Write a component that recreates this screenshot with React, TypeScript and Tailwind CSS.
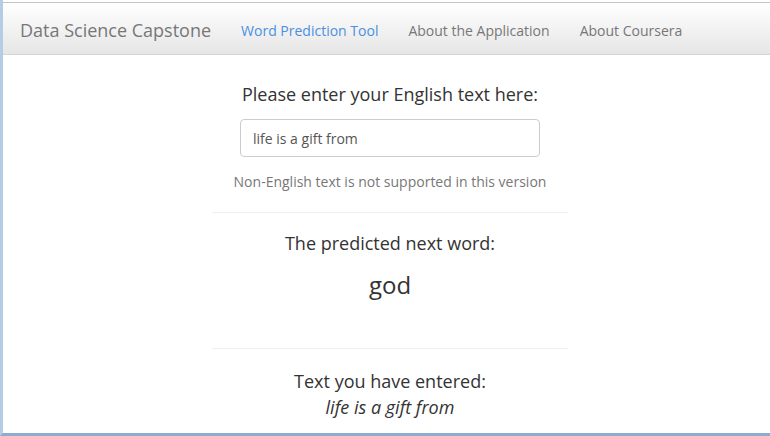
export default function App() {
  return (
    <div className="w-[770px] h-[436px] bg-white overflow-hidden font-['Open_Sans',sans-serif] text-[#333]">
      <div className="h-full flex flex-col border-l-[3px] border-l-[#b4cce6] border-b-[3px] border-b-[#8fabd0] pt-[2px]">
        {/* Navbar */}
        <nav className="h-[53px] flex items-center pt-[4px] border-t border-t-[#c4c4c4] border-b border-b-[#d4d4d4] bg-gradient-to-b from-white to-[#e6e6e6]">
          <span className="ml-[17px] text-[18px] text-[#777]">Data Science Capstone</span>
          <ul className="flex ml-[15px] text-[14px]">
            <li className="px-[15px] text-[#4a90e2]">Word Prediction Tool</li>
            <li className="px-[15px] text-[#777]">About the Application</li>
            <li className="px-[15px] text-[#777]">About Coursera</li>
          </ul>
        </nav>

        {/* Main panel */}
        <div className="ml-[209px] w-[356px] flex flex-col items-center">
          <h3 className="mt-[26px] text-[18px] leading-[26px]">Please enter your English text here:</h3>
          <div className="mt-[12px] w-[300px] h-[38px] border border-[#ccc] rounded-[4px] flex items-center px-[12px] text-[14px] text-[#555]">
            life is a gift from
          </div>
          <p className="mt-[15px] text-[14px] leading-[20px] text-[#777]">Non-English text is not supported in this version</p>
          <hr className="mt-[20px] w-full border-t border-[#eee]" />
          <h3 className="mt-[17px] text-[18px] leading-[26px]">The predicted next word:</h3>
          <div className="mt-[14px] text-[24px] leading-[30px]">god</div>
          <hr className="mt-[48px] w-full border-t border-[#eee]" />
          <h3 className="mt-[19px] text-[18px] leading-[26px]">Text you have entered:</h3>
          <div className="text-[18px] leading-[26px] italic">life is a gift from</div>
        </div>
      </div>
    </div>
  );
}
